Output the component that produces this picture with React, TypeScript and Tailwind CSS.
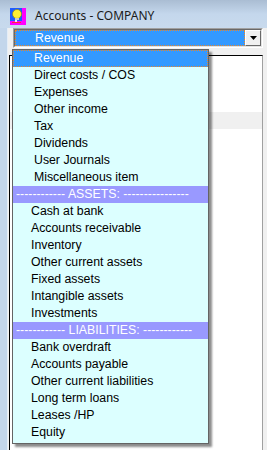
import React from "react";

const F = { fontFamily: '"Liberation Sans", Arial, sans-serif' };

function Icon() {
  return (
    <svg width="16" height="17" viewBox="0 0 16 17" className="block">
      <rect x="0" y="0" width="16" height="17" fill="#1f5cff" />
      <rect x="12" y="0" width="4" height="17" fill="#ff00ff" />
      <rect x="0" y="13" width="12" height="4" fill="#ff00ff" />
      <rect x="2" y="14" width="9" height="1" fill="#ff3030" />
      <rect x="5" y="11" width="2" height="3" fill="#f0f0f0" />
      <circle cx="7" cy="6" r="4.5" fill="#ffee33" stroke="#8a7a00" strokeWidth="0.6" />
      <rect x="5" y="10" width="4" height="2" fill="#c8c8c8" />
    </svg>
  );
}

const group1 = [
  "Direct costs / COS",
  "Expenses",
  "Other income",
  "Tax",
  "Dividends",
  "User Journals",
  "Miscellaneous item",
];
const assets = [
  "Cash at bank",
  "Accounts receivable",
  "Inventory",
  "Other current assets",
  "Fixed assets",
  "Intangible assets",
  "Investments",
];
const liabilities = [
  "Bank overdraft",
  "Accounts payable",
  "Other current liabilities",
  "Long term loans",
  "Leases /HP",
  "Equity",
];

function Row({ text, indent }: { text: string; indent: string }) {
  return (
    <div className={`h-[17px] flex items-center whitespace-nowrap text-black ${indent}`}>{text}</div>
  );
}

function Header({ text }: { text: string }) {
  return (
    <div className="h-[17px] flex items-center whitespace-nowrap bg-[#9999ff] text-white pl-[3px]">{text}</div>
  );
}

export default function App() {
  return (
    <div
      className="relative w-[267px] h-[450px] overflow-hidden bg-[#c3d6eb] flex flex-col text-[12.3px]"
      style={F}
    >
      {/* title bar */}
      <div className="h-[28px] shrink-0 flex items-center bg-gradient-to-b from-[#aabdd3] via-[#c4d7ec] to-[#c8daed] pl-[10px] pt-[4px]">
        <Icon />
        <span
          className="ml-[9px] text-[12px] text-[#1b1b1b]"
          style={{ fontFamily: '"Noto Sans", "Open Sans", sans-serif' }}
        >
          Accounts - COMPANY
        </span>
      </div>

      {/* body */}
      <div className="flex-1 flex">
        <div className="w-[8px] shrink-0 bg-[#c3d6eb] border-r border-[#e4edf7]" />
        <div className="flex-1 bg-[#f0f0f0] flex flex-col">
          {/* combo */}
          <div className="ml-[5px] mr-[4px] h-[20px] border-t border-l border-[#a0a0a0] border-b border-r border-b-white border-r-white">
            <div className="h-full border-t border-l border-[#696969] border-b border-r border-b-[#e3e3e3] border-r-[#e3e3e3] bg-white flex">
              <div className="flex-1 bg-[#3399ff] border border-dotted border-[#e8862a] flex items-center pl-[19px] text-white">
                Revenue
              </div>
              <div className="w-[16px] bg-[#f0f0f0] border-t border-l border-white border-b border-r border-b-[#696969] border-r-[#696969] flex items-center justify-center">
                <svg width="7" height="4" viewBox="0 0 7 4">
                  <polygon points="0,0 7,0 3.5,4" fill="#000" />
                </svg>
              </div>
            </div>
          </div>
          {/* panel behind */}
          <div className="mt-[7px] ml-[1px] mr-[4px] flex-1 bg-white border-t border-l border-black border-r border-r-[#a0a0a0] flex flex-col">
            <div className="h-[56px]" />
            <div className="h-[17px] bg-[#f0f0f0]" />
          </div>
        </div>
      </div>

      {/* dropdown list */}
      <div className="absolute left-[12px] top-[49px] w-[197px] bg-[#dcffff] border border-[#646464] shadow-[3px_3px_2px_rgba(0,0,0,0.45)] pb-[2px]">
        <div className="h-[17px] flex items-center bg-[#3399ff] text-white border border-dotted border-[#e8862a] pl-[20px] whitespace-nowrap">
          Revenue
        </div>
        {group1.map((t) => (
          <Row key={t} text={t} indent="pl-[21px]" />
        ))}
        <Header text="------------ ASSETS: ----------------" />
        {assets.map((t) => (
          <Row key={t} text={t} indent="pl-[18px]" />
        ))}
        <Header text="------------ LIABILITIES: ------------" />
        {liabilities.map((t) => (
          <Row key={t} text={t} indent="pl-[18px]" />
        ))}
      </div>
    </div>
  );
}
